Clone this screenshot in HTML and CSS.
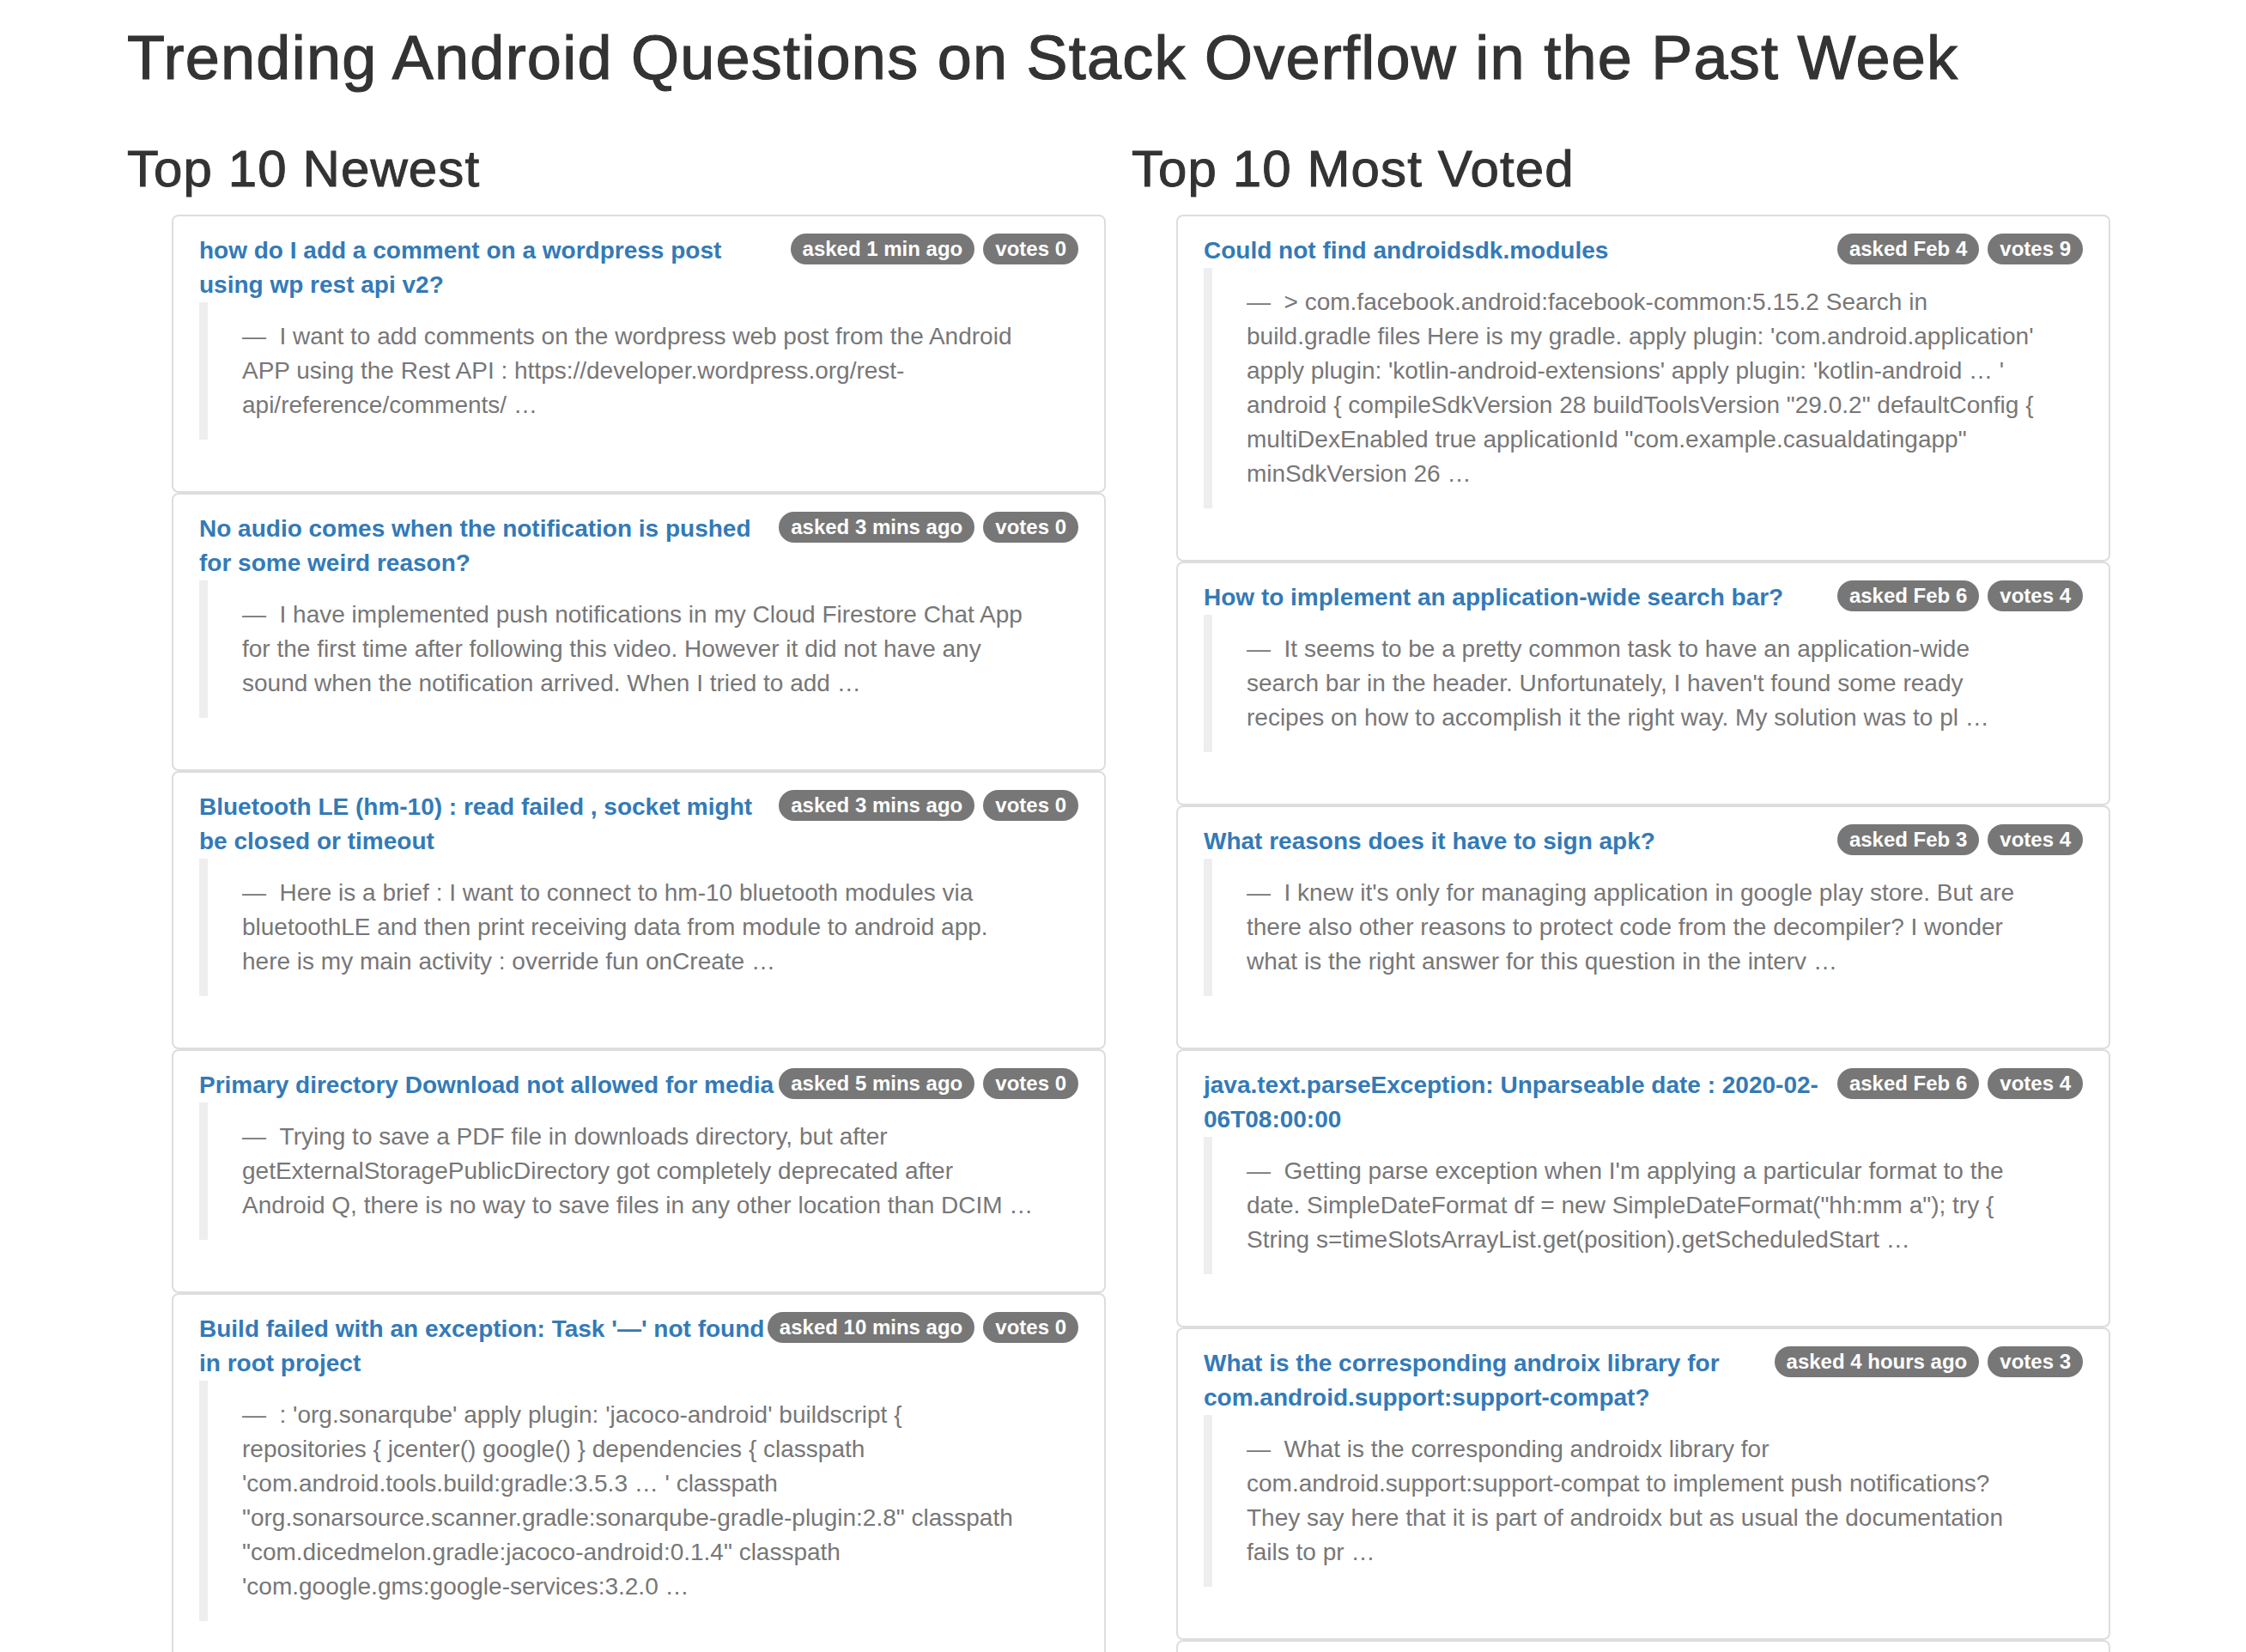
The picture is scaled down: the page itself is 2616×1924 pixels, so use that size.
FILE: index.html
```html
<!DOCTYPE html>
<html lang="en">
<head>
<meta charset="utf-8">
<title>Trending Android Questions on Stack Overflow in the Past Week</title>
<link rel="stylesheet" href="styles.css">
</head>
<body>
<div class="page">
  <h1 class="page-title">Trending Android Questions on Stack Overflow in the Past Week</h1>
  <div class="columns">
    <section class="column">
      <h2 class="column-title">Top 10 Newest</h2>
      <ul class="question-list">
        <li class="question">
          <span class="badge">votes 0</span>
          <span class="badge">asked 1 min ago</span>
          <a class="question-title" href="#">how do I add a comment on a wordpress post<br>using wp rest api v2?</a>
          <blockquote class="excerpt"><footer>I want to add comments on the wordpress web post from the Android<br>APP using the Rest API : https://developer.wordpress.org/rest-<br>api/reference/comments/ …</footer></blockquote>
        </li>
        <li class="question">
          <span class="badge">votes 0</span>
          <span class="badge">asked 3 mins ago</span>
          <a class="question-title" href="#">No audio comes when the notification is pushed<br>for some weird reason?</a>
          <blockquote class="excerpt"><footer>I have implemented push notifications in my Cloud Firestore Chat App<br>for the first time after following this video. However it did not have any<br>sound when the notification arrived. When I tried to add …</footer></blockquote>
        </li>
        <li class="question">
          <span class="badge">votes 0</span>
          <span class="badge">asked 3 mins ago</span>
          <a class="question-title" href="#">Bluetooth LE (hm-10) : read failed , socket might<br>be closed or timeout</a>
          <blockquote class="excerpt"><footer>Here is a brief : I want to connect to hm-10 bluetooth modules via<br>bluetoothLE and then print receiving data from module to android app.<br>here is my main activity : override fun onCreate …</footer></blockquote>
        </li>
        <li class="question">
          <span class="badge">votes 0</span>
          <span class="badge">asked 5 mins ago</span>
          <a class="question-title" href="#">Primary directory Download not allowed for media</a>
          <blockquote class="excerpt"><footer>Trying to save a PDF file in downloads directory, but after<br>getExternalStoragePublicDirectory got completely deprecated after<br>Android Q, there is no way to save files in any other location than DCIM …</footer></blockquote>
        </li>
        <li class="question">
          <span class="badge">votes 0</span>
          <span class="badge">asked 10 mins ago</span>
          <a class="question-title" href="#">Build failed with an exception: Task '—' not found<br>in root project</a>
          <blockquote class="excerpt"><footer>: 'org.sonarqube' apply plugin: 'jacoco-android' buildscript {<br>repositories { jcenter() google() } dependencies { classpath<br>'com.android.tools.build:gradle:3.5.3 … ' classpath<br>"org.sonarsource.scanner.gradle:sonarqube-gradle-plugin:2.8" classpath<br>"com.dicedmelon.gradle:jacoco-android:0.1.4" classpath<br>'com.google.gms:google-services:3.2.0 …</footer></blockquote>
        </li>
      </ul>
    </section>
    <section class="column">
      <h2 class="column-title">Top 10 Most Voted</h2>
      <ul class="question-list">
        <li class="question">
          <span class="badge">votes 9</span>
          <span class="badge">asked Feb 4</span>
          <a class="question-title" href="#">Could not find androidsdk.modules</a>
          <blockquote class="excerpt"><footer>&gt; com.facebook.android:facebook-common:5.15.2 Search in<br>build.gradle files Here is my gradle. apply plugin: 'com.android.application'<br>apply plugin: 'kotlin-android-extensions' apply plugin: 'kotlin-android … '<br>android { compileSdkVersion 28 buildToolsVersion "29.0.2" defaultConfig {<br>multiDexEnabled true applicationId "com.example.casualdatingapp"<br>minSdkVersion 26 …</footer></blockquote>
        </li>
        <li class="question">
          <span class="badge">votes 4</span>
          <span class="badge">asked Feb 6</span>
          <a class="question-title" href="#">How to implement an application-wide search bar?</a>
          <blockquote class="excerpt"><footer>It seems to be a pretty common task to have an application-wide<br>search bar in the header. Unfortunately, I haven't found some ready<br>recipes on how to accomplish it the right way. My solution was to pl …</footer></blockquote>
        </li>
        <li class="question">
          <span class="badge">votes 4</span>
          <span class="badge">asked Feb 3</span>
          <a class="question-title" href="#">What reasons does it have to sign apk?</a>
          <blockquote class="excerpt"><footer>I knew it's only for managing application in google play store. But are<br>there also other reasons to protect code from the decompiler? I wonder<br>what is the right answer for this question in the interv …</footer></blockquote>
        </li>
        <li class="question">
          <span class="badge">votes 4</span>
          <span class="badge">asked Feb 6</span>
          <a class="question-title" href="#">java.text.parseException: Unparseable date : 2020-02-<br>06T08:00:00</a>
          <blockquote class="excerpt"><footer>Getting parse exception when I'm applying a particular format to the<br>date. SimpleDateFormat df = new SimpleDateFormat("hh:mm a"); try {<br>String s=timeSlotsArrayList.get(position).getScheduledStart …</footer></blockquote>
        </li>
        <li class="question">
          <span class="badge">votes 3</span>
          <span class="badge">asked 4 hours ago</span>
          <a class="question-title" href="#">What is the corresponding androix library for<br>com.android.support:support-compat?</a>
          <blockquote class="excerpt"><footer>What is the corresponding androidx library for<br>com.android.support:support-compat to implement push notifications?<br>They say here that it is part of androidx but as usual the documentation<br>fails to pr …</footer></blockquote>
        </li>
        <li class="question"></li>
      </ul>
    </section>
  </div>
</div>
</body>
</html>
```
FILE: styles.css
```css
html {
  overflow: hidden;
}

body {
  margin: 0;
  background: #fff;
  color: #333;
  font-family: "Liberation Sans", Arial, Helvetica, sans-serif;
  font-size: 28px;
  line-height: 40px;
}

.page {
  padding-left: 148px;
}

.page-title {
  margin: 27px 0 0;
  font-size: 72px;
  font-weight: 400;
  line-height: 80px;
  letter-spacing: 1.25px;
  color: #333;
  -webkit-text-stroke: 1.2px #333;
}

.columns {
  display: flex;
  align-items: flex-start;
}

.column {
  width: 1140px;
  margin-right: 30px;
  flex: none;
}

.column-title {
  margin: 57px 0 20px;
  font-size: 60px;
  font-weight: 400;
  line-height: 66px;
  letter-spacing: 1.1px;
  color: #333;
  -webkit-text-stroke: 1px #333;
}

.question-list {
  list-style: none;
  margin: 0 0 0 52px;
  padding: 0;
}

.question {
  border: 2px solid #ddd;
  border-radius: 8px;
  padding: 20px 30px;
  background: #fff;
}

.badge {
  float: right;
  padding: 6px 14px;
  border-radius: 20px;
  background: #777;
  color: #fff;
  font-size: 24px;
  font-weight: 700;
  line-height: 24px;
  white-space: nowrap;
}

.badge + .badge {
  margin-right: 10px;
}

.question-title {
  color: #337ab7;
  font-weight: 700;
  text-decoration: none;
}

.excerpt {
  margin: 0 0 40px;
  padding: 20px 40px;
  border-left: 10px solid #eee;
}

.excerpt footer {
  color: #777;
  font-size: 28px;
  line-height: 40px;
  white-space: nowrap;
}

.excerpt footer::before {
  content: "\2014\00A0\00A0";
}
```
